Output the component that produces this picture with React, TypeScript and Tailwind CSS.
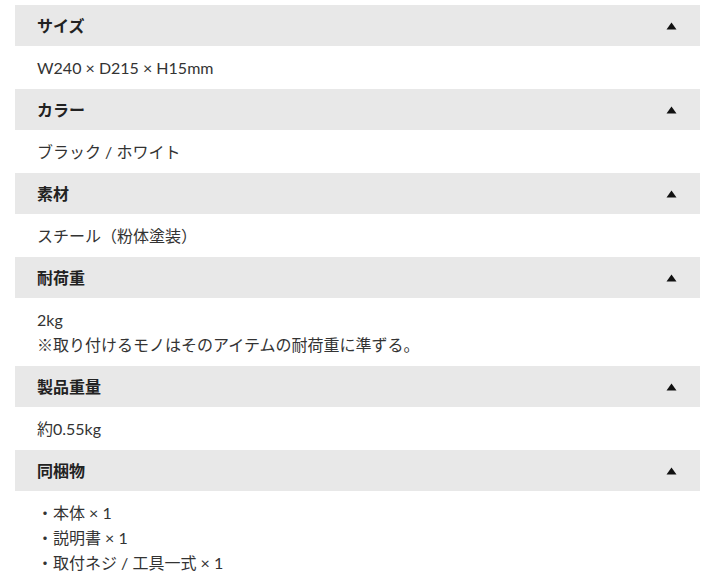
const specs: { title: string; lines: string[] }[] = [
  { title: "サイズ", lines: ["W240 × D215 × H15mm"] },
  { title: "カラー", lines: ["ブラック / ホワイト"] },
  { title: "素材", lines: ["スチール（粉体塗装）"] },
  { title: "耐荷重", lines: ["2kg", "※取り付けるモノはそのアイテムの耐荷重に準ずる。"] },
  { title: "製品重量", lines: ["約0.55kg"] },
  { title: "同梱物", lines: ["・本体 × 1", "・説明書 × 1", "・取付ネジ / 工具一式 × 1"] },
];

function Arrow() {
  return (
    <svg width="11" height="8" viewBox="0 0 11 8" className="shrink-0">
      <path d="M5.5 0.5 L10.5 7.5 L0.5 7.5 Z" fill="#111" />
    </svg>
  );
}

export default function App() {
  return (
    <div
      className="w-[712px] h-[582px] overflow-hidden bg-white pt-[5px] pl-[15px] pr-[12px]"
      style={{ fontFamily: 'Lato, "Noto Sans CJK JP", sans-serif' }}
    >
      {specs.map((s) => (
        <section key={s.title}>
          <div className="h-[41px] bg-[#e8e8e8] flex items-center justify-between pl-[22px] pr-[23px]">
            <h3 className="text-[16px] font-bold text-[#222]">{s.title}</h3>
            <Arrow />
          </div>
          <div className="py-[9px] pl-[22px] text-[16px] text-[#333]">
            {s.lines.map((l) => (
              <p key={l} className="h-[25px] leading-[25px] overflow-visible whitespace-nowrap">
                {l}
              </p>
            ))}
          </div>
        </section>
      ))}
    </div>
  );
}
